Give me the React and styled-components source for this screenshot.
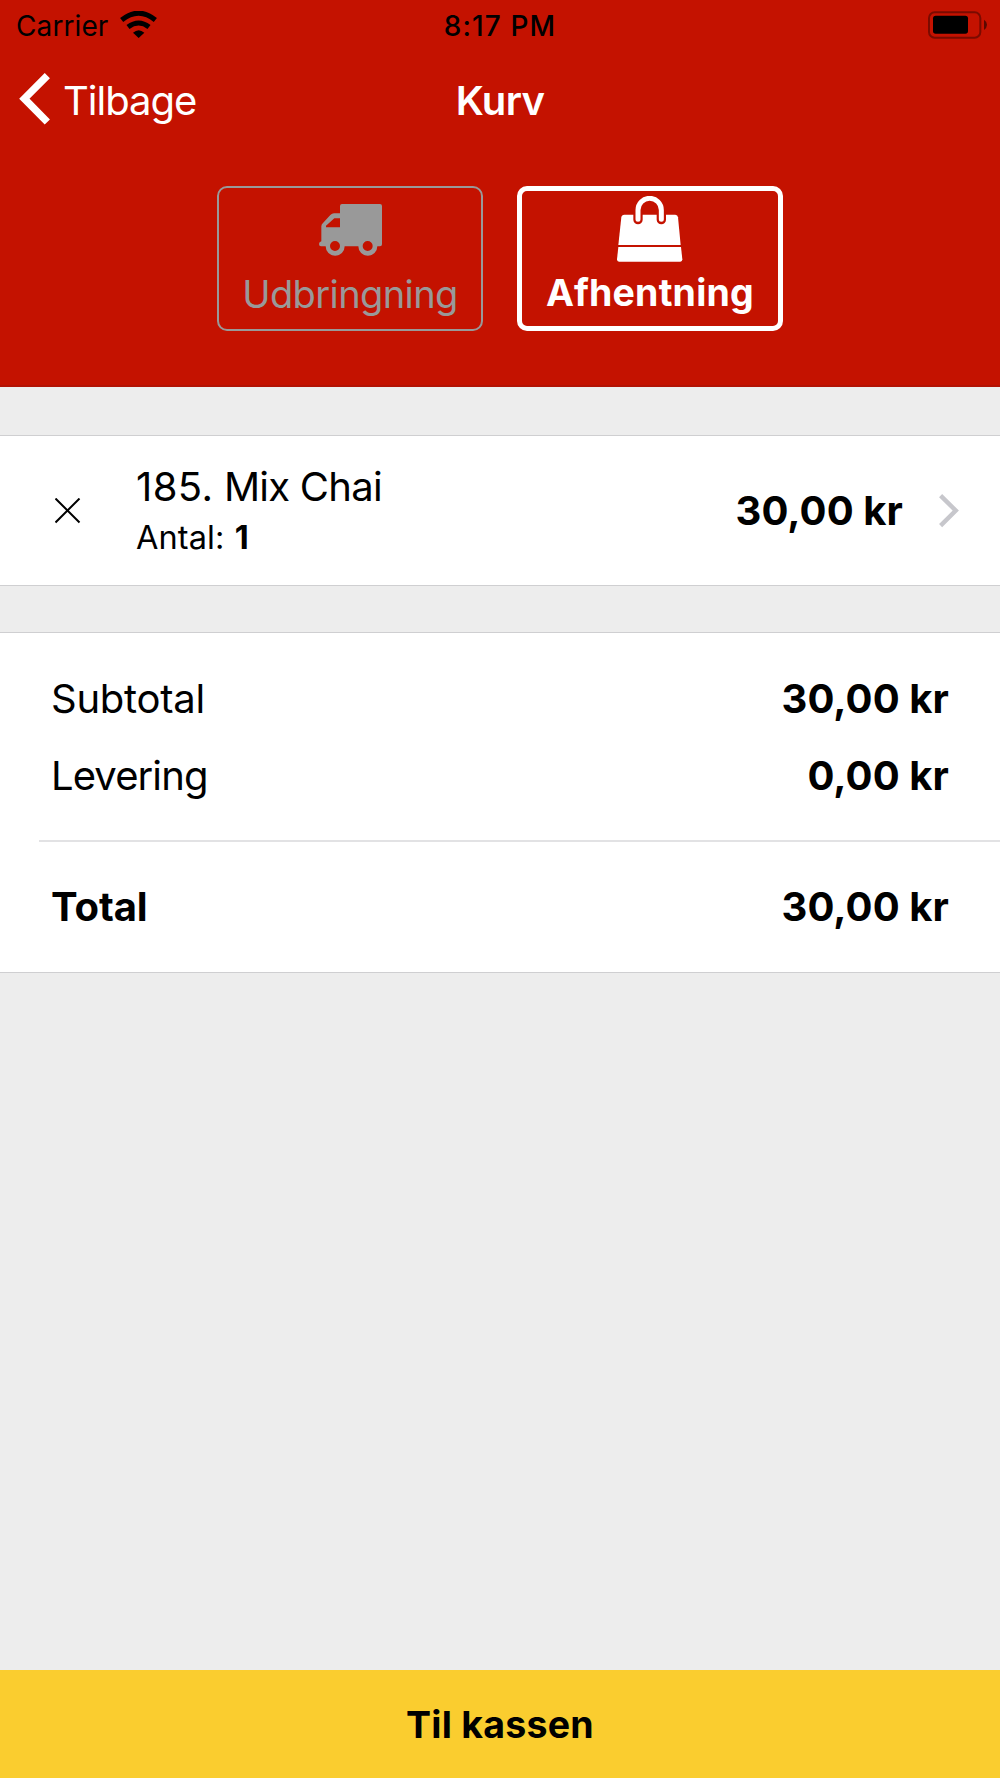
import React from 'react'
import styled, { createGlobalStyle } from 'styled-components'

const GlobalStyle = createGlobalStyle`
  * {
    box-sizing: border-box;
  }

  body {
    margin: 0;
    background: #ededed;
    font-family: Inter, "Liberation Sans", sans-serif;
  }

  svg {
    display: block;
    flex-shrink: 0;
  }
`

const summary = [
  { label: 'Subtotal', amount: '30,00 kr', spacing: '-0.25px' },
  { label: 'Levering', amount: '0,00 kr', spacing: '-0.9px' },
]

const WifiIcon = () => (
  <svg width="37" height="27" viewBox="360 30 111 81">
    <path d="M365 57 Q416 16 466 57" fill="none" stroke="#000" strokeWidth="15" />
    <path d="M384 78 Q416 54 447 78" fill="none" stroke="#000" strokeWidth="15" />
    <path d="M399 95 Q416 80 433 95 L416 111 Z" fill="#000" />
  </svg>
)

const BatteryIcon = () => (
  <svg width="60" height="28" viewBox="84 31 180 84">
    <rect x="87" y="35" width="154" height="76" rx="17" fill="none" stroke="#7a0b00" strokeWidth="6" />
    <rect x="99" y="45" width="105" height="54" rx="8" fill="#000" />
    <path d="M252 57 Q261 63 261 72 Q261 81 252 88 Z" fill="#5a0800" />
  </svg>
)

const BackIcon = () => (
  <svg width="31" height="52" viewBox="58 219 93 156">
    <path d="M143 227 L74 296 L143 366" fill="none" stroke="#fff" strokeWidth="22" />
  </svg>
)

const TruckIcon = () => (
  <svg width="63" height="52" viewBox="344 86 189 156">
    <path
      fillRule="evenodd"
      fill="#999"
      d="M413 86 H527 Q533 86 533 92 V207 Q533 213 527 213 H519 A28 28 0 0 1 462 213 H421 A28 28 0 0 1 364 213 H350 Q344 213 344 206 Q344 200 351 198 V153 Q351 147 356 143 L378 119 Q383 114 389 114 H407 V92 Q407 86 413 86 Z M407 129 H390 L365 151 V156 H407 Z M392 197 A15 15 0 1 0 392 227 A15 15 0 1 0 392 197 Z M490 197 A15 15 0 1 0 490 227 A15 15 0 1 0 490 197 Z"
    />
  </svg>
)

const BagIcon = () => (
  <svg width="66" height="66" viewBox="335 63 198 198">
    <path fill="#fff" d="M357 119 H510 Q517 119 518 127 L526 210 H339 L348 127 Q349 119 357 119 Z" />
    <path fill="#fff" d="M339 216 H527 L531 253 Q531 260 525 260 H341 Q335 260 335 253 Z" />
    <path d="M398 117 V134 M468 117 V134" stroke="#c41200" strokeWidth="28" strokeLinecap="round" />
    <path d="M398 133 V105 A35 35 0 0 1 468 105 V133" fill="none" stroke="#fff" strokeWidth="15" strokeLinecap="round" />
  </svg>
)

const RemoveIcon = () => (
  <svg width="26" height="26" viewBox="0 0 26 26">
    <path d="M0.5 0.5 L24.5 24.5 M24.5 0.5 L0.5 24.5" stroke="#000" strokeWidth="2" />
  </svg>
)

const ChevronIcon = () => (
  <svg width="21" height="34" viewBox="0 0 21 34">
    <path d="M1.6 1.6 L16.8 16.6 L1.6 31.6" fill="none" stroke="#c7c7cc" strokeWidth="4.4" />
  </svg>
)

const App = () => {
  return (
    <Screen>
      <GlobalStyle />
      <Header>
        <StatusBar>
          <Carrier>
            <Text $size={28} $spacing="0.1px">Carrier</Text>
            <WifiIcon />
          </Carrier>
          <Text $size={28} $weight={500} $spacing="1.1px">8:17 PM</Text>
          <Battery>
            <BatteryIcon />
          </Battery>
        </StatusBar>
        <NavBar>
          <BackButton>
            <BackIcon />
            <Text $size={40} $spacing="-1px">Tilbage</Text>
          </BackButton>
          <Text $size={40} $weight={600} $spacing="-0.7px">Kurv</Text>
        </NavBar>
        <Toggle>
          <ToggleButton>
            <TruckIcon />
            <Text $size={38} $spacing="-0.6px">Udbringning</Text>
          </ToggleButton>
          <ToggleButton $active>
            <BagIcon />
            <Text $size={37.5} $weight={700} $spacing="0.2px">Afhentning</Text>
          </ToggleButton>
        </Toggle>
      </Header>

      <CartItem>
        <RemoveButton>
          <RemoveIcon />
        </RemoveButton>
        <ItemInfo>
          <Text $size={40} $line={54} $spacing="-0.75px">
            <ItemNumber>185.</ItemNumber> Mix Chai
          </Text>
          <Text $size={32.5} $line={48} $spacing="0.1px">Antal: <b>1</b></Text>
        </ItemInfo>
        <Text $size={40} $weight={700} $spacing="0.1px">30,00 kr</Text>
        <ChevronIcon />
      </CartItem>

      <Summary>
        <Lines>
          {summary.map((row) => (
            <Row key={row.label}>
              <Text $size={40} $spacing={row.spacing}>{row.label}</Text>
              <Text $size={40} $weight={700} $spacing="0.1px">{row.amount}</Text>
            </Row>
          ))}
        </Lines>
        <Divider />
        <Row $total>
          <Text $size={40} $weight={700} $spacing="-0.1px">Total</Text>
          <Text $size={40} $weight={700} $spacing="0.1px">30,00 kr</Text>
        </Row>
      </Summary>

      <Checkout>
        <Text $size={37.5} $weight={700} $spacing="0.25px">Til kassen</Text>
      </Checkout>
    </Screen>
  )
}

export default App

const Screen = styled.div`
  width: 1000px;
  height: 1778px;
  display: flex;
  flex-direction: column;
  background: #ededed;
  color: #000;
  overflow: hidden;
`

const Text = styled.span`
  font-size: ${(p) => p.$size}px;
  font-weight: ${(p) => p.$weight || 400};
  line-height: ${(p) => (p.$line ? `${p.$line}px` : '1.2')};
  letter-spacing: ${(p) => p.$spacing};
  white-space: pre;

  b {
    margin-left: 1px;
    font-weight: 700;
  }
`

const ItemNumber = styled.span`
  letter-spacing: 0.4px;
`

const Header = styled.header`
  height: 387px;
  background: #c41200;
  border-bottom: 2px solid #b21305;
`

const StatusBar = styled.div`
  height: 51px;
  padding: 2px 12px 0;
  display: grid;
  grid-template-columns: 1fr auto 1fr;
  align-items: center;
`

const Carrier = styled.div`
  padding-left: 4px;
  display: flex;
  align-items: center;
  gap: 12px;

  svg {
    margin-bottom: 5px;
  }
`

const Battery = styled.div`
  display: flex;
  justify-content: flex-end;
  padding-bottom: 4px;
`

const NavBar = styled.nav`
  height: 100px;
  padding: 0 19px;
  display: grid;
  grid-template-columns: 1fr auto 1fr;
  align-items: center;
  color: #fff;
`

const BackButton = styled.div`
  display: flex;
  align-items: center;
  gap: 13px;

  svg {
    margin-bottom: 4px;
  }
`

const Toggle = styled.div`
  display: flex;
  justify-content: center;
  gap: 34px;
  padding-top: 35px;
`

const ToggleButton = styled.div`
  width: 266px;
  height: 145px;
  padding-top: ${(p) => (p.$active ? '5px' : '16px')};
  display: flex;
  flex-direction: column;
  align-items: center;
  gap: ${(p) => (p.$active ? '8px' : '16px')};
  border: ${(p) => (p.$active ? '5px solid #fff' : '2px solid #999')};
  border-radius: 10px;
  color: ${(p) => (p.$active ? '#fff' : '#999')};

  svg {
    margin-left: ${(p) => (p.$active ? '0' : '1px')};
  }
`

const CartItem = styled.section`
  height: 151px;
  margin-top: 48px;
  padding: 0 40px 0 55px;
  display: flex;
  align-items: center;
  background: #fff;
  border-top: 1px solid #cfcfd1;
  border-bottom: 1px solid #cfcfd1;

  > svg {
    margin-left: 36px;
  }
`

const RemoveButton = styled.div`
  width: 81px;
`

const ItemInfo = styled.div`
  flex: 1;
  display: flex;
  flex-direction: column;
`

const Summary = styled.section`
  margin-top: 46px;
  height: 341px;
  background: #fff;
  border-top: 1px solid #cfcfd1;
  border-bottom: 1px solid #cfcfd1;
`

const Lines = styled.div`
  height: 207px;
  padding-top: 27px;
`

const Row = styled.div`
  height: ${(p) => (p.$total ? 130 : 77.5)}px;
  padding: 0 51px;
  display: flex;
  align-items: center;
  justify-content: space-between;
`

const Divider = styled.div`
  height: 2px;
  margin-left: 39px;
  background: #e2e2e4;
`

const Checkout = styled.footer`
  height: 108px;
  margin-top: auto;
  padding-top: 1px;
  display: flex;
  align-items: center;
  justify-content: center;
  background: #facd2f;
`
